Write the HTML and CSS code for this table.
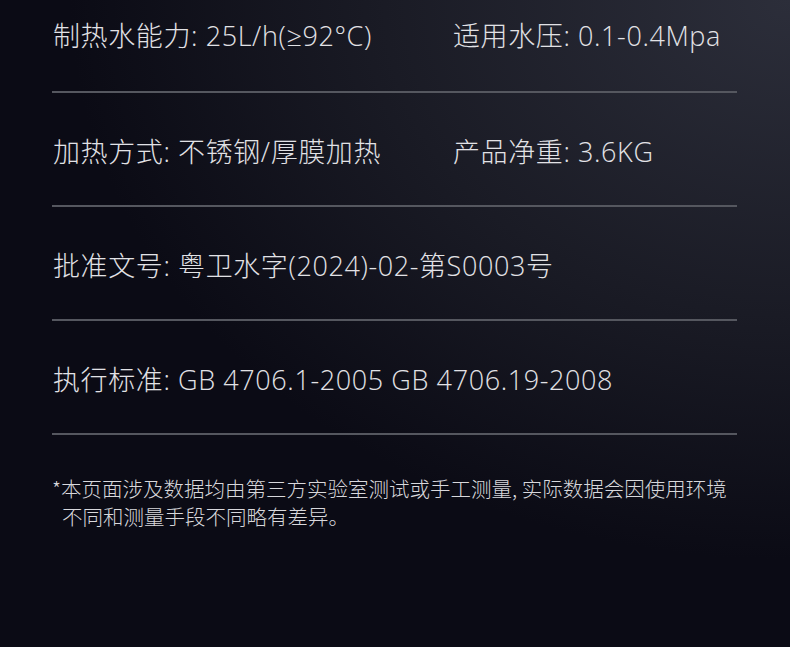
FILE: index.html
```html
<!DOCTYPE html>
<html lang="zh-CN">
<head>
  <meta charset="UTF-8">
  <title>产品参数</title>
  <link rel="stylesheet" href="styles.css">
</head>
<body>

  <div class="specs">
    <div class="spec-row first">
      <div class="spec">制热水能力: 25L/h(≥92°C)</div>
      <div class="spec">适用水压: 0.1-0.4Mpa</div>
    </div>
    <div class="spec-row">
      <div class="spec">加热方式: 不锈钢/厚膜加热</div>
      <div class="spec">产品净重: 3.6KG</div>
    </div>
    <div class="spec-row">
      <div class="spec">批准文号: 粤卫水字(2024)-02-第S0003号</div>
    </div>
    <div class="spec-row">
      <div class="spec">执行标准: GB 4706.1-2005 GB 4706.19-2008</div>
    </div>

    <p class="footnote">*本页面涉及数据均由第三方实验室测试或手工测量, 实际数据会因使用环境不同和测量手段不同略有差异。</p>
  </div>

</body>
</html>
```

FILE: styles.css
```css
body, html {
  height: 100%;
  margin: 0;
  font-family: "Noto Sans CJK SC", "Noto Sans", sans-serif;
  background: radial-gradient(ellipse 900px 700px at 100% 0%, #2c2e3a 0%, #1a1b25 45%, #0b0b15 80%);
  background-color: #0b0b15;
  color: #e2e2e6;
  overflow: hidden;
}

.specs {
  width: 685px;
  margin-left: 52px;
}

.spec-row {
  display: grid;
  grid-template-columns: 400px 1fr;
  padding: 41px 0 35px;
  border-bottom: 2px solid #55575f;
}

.spec-row.first {
  padding-top: 18px;
  padding-bottom: 37px;
}

.spec {
  font-family: "Open Sans", "Noto Sans CJK SC", sans-serif;
  font-size: 27px;
  font-weight: 300;
  line-height: 36px;
  letter-spacing: 0.6px;
  white-space: nowrap;
  padding-left: 1px;
}

.footnote {
  margin: 0;
  padding: 39px 0 0 10px;
  text-indent: -10px;
  font-size: 20.5px;
  font-weight: 300;
  line-height: 28px;
  color: #d8d8dc;
}
```
